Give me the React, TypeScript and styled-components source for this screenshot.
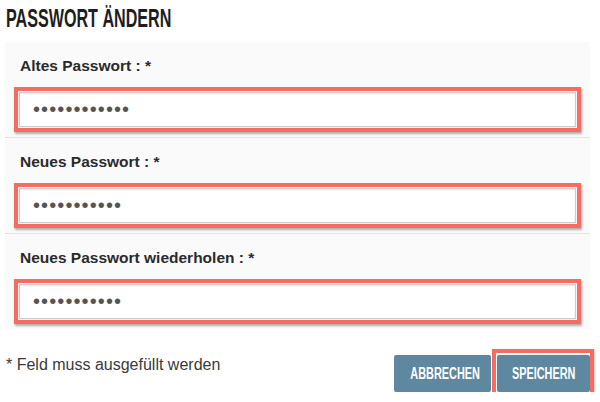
import styled, {createGlobalStyle} from "styled-components";

const GlobalStyle = createGlobalStyle`
  body {
    margin: 0;
    background: #ffffff;
    font-family: "Liberation Sans", Arial, sans-serif;
    color: #333333;
  }
  * {
    box-sizing: border-box;
  }
`;

const Page = styled.div`
  width: 600px;
  padding: 3px 10px 0 5px;
`;

const Title = styled.h1`
  margin: 0 0 9px 1px;
  height: 30px;
  line-height: 30px;
  font-size: 26px;
  font-weight: bold;
  color: #1e1e1e;
  white-space: nowrap;
`;

// stands in for the condensed display face of the original
const Condensed = styled.span<{ $scale: number; $origin?: string }>`
  display: inline-block;
  transform: scaleX(${props => props.$scale});
  transform-origin: ${props => props.$origin || "center"};
`;

const Panel = styled.div`
  background-color: #fafafa;
`;

const Row = styled.div`
  padding: 14px 9px 5px;
  border-bottom: 1px solid #e4e4e4;

  &:last-child {
    border-bottom: none;
  }
`;

const Label = styled.label`
  display: block;
  padding-left: 6px;
  margin-bottom: 11px;
  line-height: 20px;
  font-size: 15.5px;
  font-weight: bold;
  color: #2b2b2b;
`;

const Highlight = styled.div`
  border: 4px solid #f76c62;
  padding: 1px;
  background: #f4f4f4;
  box-shadow: 1px 2px 2px rgba(0, 0, 0, 0.3);
`;

const PasswordInput = styled.input`
  display: block;
  width: 100%;
  height: 35px;
  margin: 0;
  padding: 0 13px;
  border: 1px solid #cccccc;
  background: #ffffff;
  box-shadow: inset 0 1px 2px rgba(0, 0, 0, 0.12);
  font-family: "Liberation Sans", Arial, sans-serif;
  font-size: 20px;
  letter-spacing: 1.1px;
  color: #555555;
  outline: none;
`;

const Footer = styled.div`
  display: flex;
  justify-content: space-between;
  align-items: flex-start;
  padding: 26px 0 0 1px;
`;

const Note = styled.p`
  margin: 0;
  font-size: 16px;
  line-height: 20px;
  color: #3a3a3a;
`;

const Buttons = styled.div`
  display: flex;
  gap: 6px;
`;

const Button = styled.button<{ $marked?: boolean }>`
  position: relative;
  width: ${props => props.$marked ? "93px" : "97px"};
  height: 37px;
  padding: 0;
  border: none;
  border-radius: 2px;
  background-color: #5e87a0;
  color: #ffffff;
  font-family: "Liberation Sans", Arial, sans-serif;
  font-size: 16px;
  font-weight: bold;
  white-space: nowrap;
  cursor: pointer;

  &::after {
    content: "";
    display: ${props => props.$marked ? "block" : "none"};
    position: absolute;
    inset: -6px -4px -6px -5px;
    border: 4px solid #f76c62;
    box-shadow: 1px 1px 2px rgba(0, 0, 0, 0.25);
  }
`;

const fields = [
    {label: "Altes Passwort : *", value: "geheimes1234"},
    {label: "Neues Passwort : *", value: "neuesPasswo"},
    {label: "Neues Passwort wiederholen : *", value: "neuesPasswo"},
];

export default function App() {
    return (
        <Page>
            <GlobalStyle/>
            <Title>
                <Condensed $scale={0.62} $origin="left">PASSWORT ÄNDERN</Condensed>
            </Title>
            <Panel>
                {fields.map(field => (
                    <Row key={field.label}>
                        <Label>{field.label}</Label>
                        <Highlight>
                            <PasswordInput type="password" defaultValue={field.value} readOnly/>
                        </Highlight>
                    </Row>
                ))}
            </Panel>
            <Footer>
                <Note>* Feld muss ausgefüllt werden</Note>
                <Buttons>
                    <Button><Condensed $scale={0.68}>ABBRECHEN</Condensed></Button>
                    <Button $marked><Condensed $scale={0.68}>SPEICHERN</Condensed></Button>
                </Buttons>
            </Footer>
        </Page>
    )
}
